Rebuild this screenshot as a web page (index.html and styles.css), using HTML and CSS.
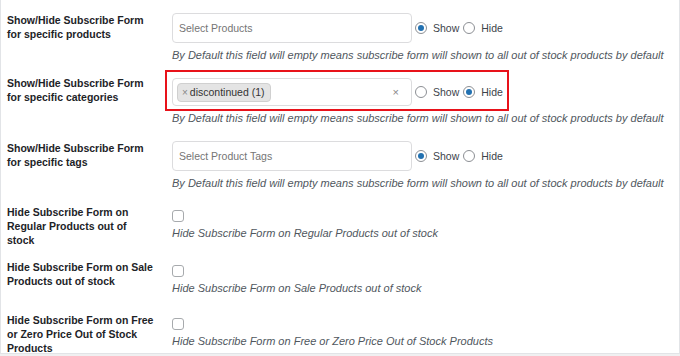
FILE: index.html
```html
<!DOCTYPE html>
<html>
<head>
<meta charset="utf-8">
<link rel="stylesheet" href="styles.css">
</head>
<body>
<div class="panel">
  <div class="row r1">
    <div class="label">Show/Hide Subscribe Form for specific products</div>
    <div class="field">
      <div class="line">
        <div class="select"><span class="ph">Select Products</span></div>
        <label class="radio"><span class="dot on"></span>Show</label>
        <label class="radio"><span class="dot"></span>Hide</label>
      </div>
      <p class="desc">By Default this field will empty means subscribe form will shown to all out of stock products by default</p>
    </div>
  </div>
  <div class="row r2">
    <div class="label">Show/Hide Subscribe Form for specific categories</div>
    <div class="field">
      <div class="line hl">
        <div class="select multi">
          <span class="chip"><span class="cx">×</span>discontinued (1)</span>
          <span class="clear">×</span>
        </div>
        <label class="radio"><span class="dot"></span>Show</label>
        <label class="radio"><span class="dot on"></span>Hide</label>
      </div>
      <p class="desc">By Default this field will empty means subscribe form will shown to all out of stock products by default</p>
    </div>
  </div>
  <div class="row r3">
    <div class="label">Show/Hide Subscribe Form for specific tags</div>
    <div class="field">
      <div class="line">
        <div class="select"><span class="ph">Select Product Tags</span></div>
        <label class="radio"><span class="dot on"></span>Show</label>
        <label class="radio"><span class="dot"></span>Hide</label>
      </div>
      <p class="desc">By Default this field will empty means subscribe form will shown to all out of stock products by default</p>
    </div>
  </div>
  <div class="row r4">
    <div class="label">Hide Subscribe Form on Regular Products out of stock</div>
    <div class="field">
      <span class="check"></span>
      <p class="desc">Hide Subscribe Form on Regular Products out of stock</p>
    </div>
  </div>
  <div class="row r5">
    <div class="label">Hide Subscribe Form on Sale Products out of stock</div>
    <div class="field">
      <span class="check"></span>
      <p class="desc">Hide Subscribe Form on Sale Products out of stock</p>
    </div>
  </div>
  <div class="row r6">
    <div class="label">Hide Subscribe Form on Free or Zero Price Out of Stock Products</div>
    <div class="field">
      <span class="check"></span>
      <p class="desc">Hide Subscribe Form on Free or Zero Price Out of Stock Products</p>
    </div>
  </div>
</div>
</body>
</html>
```

FILE: styles.css
```css
html, body {
  margin: 0;
  padding: 0;
  background: #f0f0f1;
  font-family: "Liberation Sans", Arial, sans-serif;
  color: #1d2327;
}
.panel {
  width: 678px;
  height: 353px;
  background: #fff;
  border-left: 1px solid #e2e4e7;
  border-right: 1px solid #e2e4e7;
  border-bottom: 1px solid #e2e4e7;
  box-sizing: content-box;
}
.row {
  display: grid;
  grid-template-columns: 171px 1fr;
}
.r1 { padding-top: 13px; height: 50px; }
.r2 { padding-top: 7px; height: 57px; }
.r3 { padding-top: 14px; height: 51px; }
.r4 { padding-top: 13px; height: 44px; }
.r5 { padding-top: 11px; height: 41px; }
.r6 { padding-top: 12px; }
.label {
  padding-left: 6px;
  padding-right: 18px;
  font-weight: bold;
  font-size: 10.5px;
  line-height: 14px;
}
.r2 .label { padding-top: 6px; }
.field {
  display: flex;
  flex-direction: column;
  align-items: flex-start;
}
.line {
  display: flex;
  align-items: center;
}
.line.hl {
  margin-left: -7px;
  border: 2px solid #e8121a;
  padding: 6px 4px 3px 5px;
}
.select {
  width: 240px;
  height: 28px;
  border: 1px solid #dcdcde;
  border-radius: 4px;
  box-sizing: border-box;
  display: flex;
  align-items: center;
  padding-left: 6px;
  font-size: 10.5px;
  margin-right: 3px;
  background: #fff;
}
.r1 .select, .r3 .select { height: 30px; }
.ph { color: #757575; }
.multi {
  padding-left: 4px;
  padding-right: 12px;
  justify-content: space-between;
}
.chip {
  display: inline-flex;
  align-items: center;
  height: 19px;
  padding: 0 5px 0 4px;
  background: #e4e4e4;
  border: 1px solid #d0d0d0;
  border-radius: 4px;
  color: #333;
  font-size: 10.5px;
  box-sizing: border-box;
}
.cx { color: #888; margin-right: 2px; font-size: 10px; }
.clear { color: #888; font-size: 11px; }
.radio {
  display: inline-flex;
  align-items: center;
  font-size: 10.5px;
  color: #3c434a;
  margin-right: 4px;
}
.line.hl .radio:last-child { margin-right: 0; }
.dot {
  width: 12px;
  height: 12px;
  border: 1px solid #8c8f94;
  border-radius: 50%;
  box-sizing: border-box;
  margin-right: 6px;
  display: inline-flex;
  align-items: center;
  justify-content: center;
}
.dot.on::after {
  content: "";
  width: 6px;
  height: 6px;
  border-radius: 50%;
  background: #2271b1;
}
.desc {
  margin: 5px 0 0 0;
  font-style: italic;
  font-size: 11px;
  line-height: 14px;
  color: #50575e;
}
.r2 .desc { margin-top: 0; }
.check {
  margin-top: 5px;
  width: 12px;
  height: 12px;
  border: 1px solid #a7aaad;
  border-radius: 3px;
  box-sizing: border-box;
}
.check + .desc { margin-top: 4px; }
```
